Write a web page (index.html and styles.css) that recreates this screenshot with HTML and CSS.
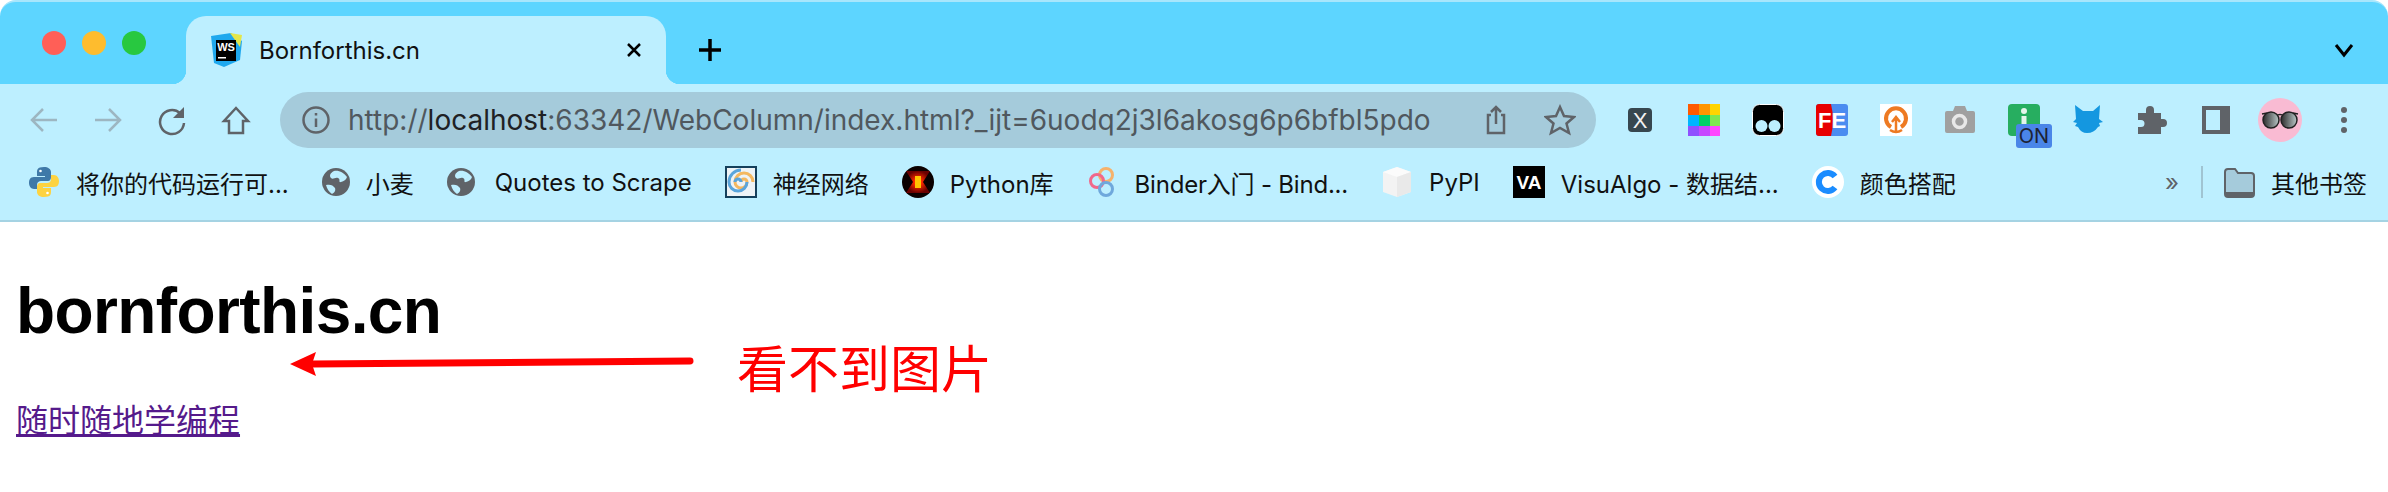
FILE: index.html
```html
<!DOCTYPE html>
<html>
<head>
    <title>Bornforthis.cn</title>
    <link rel="stylesheet" href="styles.css">
</head>
<body>

    <div class="tabstrip">
        <div class="lights">
            <span class="light red"></span>
            <span class="light yellow"></span>
            <span class="light green"></span>
        </div>
        <div class="tab">
            <svg class="favicon" viewBox="0 0 32 34">
                <path d="M1 3L21 0L32 8L30 27L14 34L4 30z" fill="#1fa8ee"/>
                <path d="M20 0L32 2L30 14z" fill="#e4e64a"/>
                <rect x="6" y="7" width="20" height="21" fill="#000"/>
                <text x="16" y="18" class="ws-text">WS</text>
                <rect x="8" y="24" width="8" height="1.5" fill="#fff"/>
            </svg>
            <span class="tab-title">Bornforthis.cn</span>
            <svg class="tab-close" viewBox="0 0 20 20">
                <path d="M4 4L16 16M16 4L4 16"/>
            </svg>
        </div>
        <svg class="new-tab" viewBox="0 0 32 32">
            <path d="M16 5V27M5 16H27"/>
        </svg>
        <svg class="tab-menu" viewBox="0 0 32 32">
            <path d="M8 11L16 21L24 11"/>
        </svg>
    </div>

    <div class="toolbar">
        <div class="btn">
            <svg class="line-icon faded" viewBox="0 0 32 32"><path d="M29 16H4M15 5L4 16L15 27"/></svg>
        </div>
        <div class="btn">
            <svg class="line-icon faded" viewBox="0 0 32 32"><path d="M3 16H28M17 5L28 16L17 27"/></svg>
        </div>
        <div class="btn">
            <svg class="line-icon" viewBox="0 0 32 32">
                <path d="M24 9A12 12 0 1 0 28 19"/>
                <path d="M28 3V14H17z" class="solid"/>
            </svg>
        </div>
        <div class="btn">
            <svg class="line-icon" viewBox="0 0 32 32"><path d="M16 4L4 17H9V29H23V17H28z"/></svg>
        </div>

        <div class="address">
            <svg class="line-icon info" viewBox="0 0 32 32">
                <circle cx="16" cy="16" r="12.5"/>
                <path d="M16 14.5V23M16 9V11.5"/>
            </svg>
            <span class="url">http://<b>localhost</b>:63342/WebColumn/index.html?_ijt=6uodq2j3l6akosg6p6bfbl5pdo</span>
            <svg class="line-icon share" viewBox="0 0 32 32">
                <path d="M11 11H8V29H24V11H21M16 20V3M11 8L16 3L21 8"/>
            </svg>
            <svg class="line-icon star" viewBox="0 0 32 32">
                <path d="M16 3L20 12L30 13L22.500 19.500L25 29L16 24L7 29L9.500 19.500L2 13L12 12z"/>
            </svg>
        </div>

        <div class="btn">
            <svg class="ext" viewBox="0 0 32 32">
                <rect x="4" y="4" width="24" height="24" rx="4" fill="#37474f"/>
                <text x="16" y="24" class="x-text">X</text>
            </svg>
        </div>
        <div class="btn">
            <svg class="ext" viewBox="0 0 32 32">
                <rect x="0" y="0" width="11" height="11" fill="#ff5a00"/>
                <rect x="11" y="0" width="11" height="11" fill="#ff9500"/>
                <rect x="22" y="0" width="10" height="11" fill="#ffd400"/>
                <rect x="0" y="11" width="11" height="11" fill="#00b4ff"/>
                <rect x="11" y="11" width="11" height="11" fill="#00d068"/>
                <rect x="22" y="11" width="10" height="11" fill="#80e650"/>
                <rect x="0" y="22" width="11" height="10" fill="#9050ff"/>
                <rect x="11" y="22" width="11" height="10" fill="#c648ff"/>
                <rect x="22" y="22" width="10" height="10" fill="#ff48ff"/>
            </svg>
        </div>
        <div class="btn">
            <svg class="ext" viewBox="0 0 32 32">
                <rect x="0.500" y="0.500" width="31" height="31" rx="7" fill="#000" stroke="#fff"/>
                <circle cx="9.500" cy="22" r="6" fill="#bdefff"/>
                <circle cx="22.500" cy="22" r="6" fill="#bdefff"/>
            </svg>
        </div>
        <div class="btn">
            <svg class="ext" viewBox="0 0 32 32">
                <rect width="32" height="32" rx="3" fill="#4b8cf0"/>
                <path d="M3 0H15Q19 16 15 32H3Q0 32 0 29V3Q0 0 3 0z" fill="#e80000"/>
                <text x="16" y="24" class="fe-text">FE</text>
            </svg>
        </div>
        <div class="btn">
            <svg class="ext" viewBox="0 0 32 32">
                <rect width="32" height="32" fill="#fff"/>
                <path d="M11 23A10 10 0 1 1 21 23" class="q-ring"/>
                <path d="M16 27V14M12 18L16 13L20 18" class="q-arrow"/>
                <path d="M10 26Q16 30 22 26" class="q-arrow"/>
            </svg>
        </div>
        <div class="btn">
            <svg class="ext" viewBox="0 0 32 32">
                <path d="M3 7H9L11 2H21L23 7H29Q31 7 31 9V27Q31 29 29 29H3Q1 29 1 27V9Q1 7 3 7z" fill="#a0a0a0"/>
                <circle cx="15.500" cy="17.500" r="6" fill="none" stroke="#e8e8e8" stroke-width="3.500"/>
            </svg>
        </div>
        <div class="btn">
            <div class="ext-info">
                <svg class="ext" viewBox="0 0 32 32">
                    <rect width="32" height="32" rx="4" fill="#27ae60"/>
                    <circle cx="16" cy="7" r="3" fill="#e4f5ea"/>
                    <rect x="13.500" y="12" width="5" height="12" fill="#e4f5ea"/>
                </svg>
                <span class="badge">ON</span>
            </div>
        </div>
        <div class="btn">
            <svg class="ext" viewBox="0 0 32 32">
                <path d="M3 1L11 7H21L28 1L27 15L31 18L27 19L28 22L26 23Q22 29 15 29Q9 29 6 23L3 22L5 19L1 18L4 15z" fill="#1497e0"/>
            </svg>
        </div>
        <div class="btn">
            <svg class="ext" viewBox="0 0 32 32">
                <path d="M2 9H10V6A4 4 0 0 1 18 6V9H25V15H27A4 4 0 0 1 27 23H25V30H2V23H5A3.500 3.500 0 0 0 5 16H2z" fill="#5f6368"/>
            </svg>
        </div>
        <div class="btn">
            <div class="panel"></div>
        </div>
        <div class="btn">
            <div class="avatar">
                <svg class="glasses" viewBox="0 0 38 20">
                    <defs>
                        <linearGradient id="lens">
                            <stop offset="0" stop-color="#2b2b2b"/>
                            <stop offset="1" stop-color="#b9c8c8"/>
                        </linearGradient>
                    </defs>
                    <path d="M1 4L6 3M37 4L32 3M15 6Q19 3 23 6" stroke="#222" stroke-width="1.500" fill="none"/>
                    <circle cx="10" cy="10" r="8" fill="url(#lens)" stroke="#222" stroke-width="1.500"/>
                    <circle cx="28" cy="10" r="8" fill="url(#lens)" stroke="#222" stroke-width="1.500"/>
                </svg>
            </div>
        </div>
        <div class="btn">
            <div class="dots"><span></span><span></span><span></span></div>
        </div>
    </div>

    <div class="bookmarks">
        <div class="bookmark">
            <svg class="bm-icon" viewBox="0 0 32 32">
                <path d="M16 1C9 1 9 4 9 7V10H17V11H6C2 11 1 14 1 17S3 23 6 23H9V19C9 16 11 15 13 15H20C22 15 23 13 23 11V6C23 3 20 1 16 1z" fill="#3f79a8"/>
                <path d="M16 31C23 31 23 28 23 25V22H15V21H26C30 21 31 18 31 15S29 9 26 9H23V13C23 16 21 17 19 17H12C10 17 9 19 9 21V26C9 29 12 31 16 31z" fill="#fdd341"/>
                <circle cx="12.500" cy="5" r="1.300" fill="#fff"/>
                <circle cx="19.500" cy="27" r="1.300" fill="#fff"/>
            </svg>
            <span>将你的代码运行可...</span>
        </div>
        <div class="bookmark">
            <svg class="bm-icon globe" viewBox="0 0 28 28">
                <circle cx="14" cy="14" r="14" fill="#5f6368"/>
                <path d="M12 3C8 5 7 8 9 10C11 12 13 9 16 10C19 11 16 15 19 14C22 13 24 12 25 9C22 5 17 2 12 3zM4 17C8 16 11 17 13 20C14 23 12 25 10 26C7 24 5 21 4 17z" fill="#bdefff"/>
            </svg>
            <span>小麦</span>
        </div>
        <div class="bookmark bm-quotes">
            <svg class="bm-icon globe" viewBox="0 0 28 28">
                <circle cx="14" cy="14" r="14" fill="#5f6368"/>
                <path d="M12 3C8 5 7 8 9 10C11 12 13 9 16 10C19 11 16 15 19 14C22 13 24 12 25 9C22 5 17 2 12 3zM4 17C8 16 11 17 13 20C14 23 12 25 10 26C7 24 5 21 4 17z" fill="#bdefff"/>
            </svg>
            <span>Quotes to Scrape</span>
        </div>
        <div class="bookmark">
            <svg class="bm-icon" viewBox="0 0 32 32">
                <rect width="32" height="32" fill="#15405c"/>
                <rect x="2" y="2" width="28" height="28" fill="#eef3f6"/>
                <path d="M16 16A3 3 0 0 1 22 16A6 6 0 0 1 10 16A9 9 0 0 1 28 16" fill="none" stroke="#f4b860" stroke-width="3"/>
                <path d="M16 16A3 3 0 0 0 10 16M22 16A9 9 0 0 1 4 16A12 12 0 0 1 16 4" fill="none" stroke="#5aa5dc" stroke-width="3"/>
            </svg>
            <span>神经网络</span>
        </div>
        <div class="bookmark">
            <svg class="bm-icon" viewBox="0 0 32 32">
                <defs>
                    <radialGradient id="glow">
                        <stop offset="0.300" stop-color="#ff2a00"/>
                        <stop offset="1" stop-color="#6a0000"/>
                    </radialGradient>
                </defs>
                <circle cx="16" cy="16" r="16" fill="#0b0000"/>
                <path d="M4 5H28L21 16L28 27H4L11 16z" fill="url(#glow)"/>
                <rect x="13" y="10" width="6" height="12" fill="#ffc400"/>
            </svg>
            <span>Python库</span>
        </div>
        <div class="bookmark bm-binder">
            <svg class="bm-icon" viewBox="0 0 32 32">
                <circle cx="19" cy="9" r="6.500" fill="none" stroke="#f6b26b" stroke-width="3"/>
                <circle cx="10" cy="15" r="6.500" fill="none" stroke="#f0688a" stroke-width="3"/>
                <circle cx="19" cy="23" r="6.500" fill="none" stroke="#6fa8dc" stroke-width="3"/>
            </svg>
            <span>Binder入门 - Bind...</span>
        </div>
        <div class="bookmark">
            <svg class="bm-icon" viewBox="0 0 32 32">
                <path d="M16 1L30 6V26L16 31L2 26V6z" fill="#f3f3f3"/>
                <path d="M2 6L16 11L30 6L16 1z" fill="#fbfbfb"/>
                <path d="M16 11V31L30 26V6z" fill="#e9e9e9"/>
            </svg>
            <span>PyPI</span>
        </div>
        <div class="bookmark">
            <svg class="bm-icon" viewBox="0 0 32 32">
                <rect width="32" height="32" fill="#000"/>
                <text x="16" y="23" class="va-text">VA</text>
            </svg>
            <span>VisuAlgo - 数据结...</span>
        </div>
        <div class="bookmark">
            <svg class="bm-icon" viewBox="0 0 32 32">
                <circle cx="16" cy="16" r="16" fill="#fff"/>
                <path d="M23 10.500A9 9 0 1 0 23 21.500" class="c-arc"/>
            </svg>
            <span>颜色搭配</span>
        </div>

        <div class="bm-more">»</div>
        <div class="bm-divider"></div>
        <div class="bookmark bm-last">
            <svg class="bm-icon" viewBox="0 0 32 32">
                <path d="M2 6Q2 3 5 3H12L15 7H28Q31 7 31 10V28Q31 31 28 31H5Q2 31 2 28z" fill="#a5cbdb" stroke="#5f6368" stroke-width="2"/>
                <rect x="2" y="26" width="29" height="4" fill="#5f6368"/>
            </svg>
            <span>其他书签</span>
        </div>
    </div>

    <div class="page">
        <h1>bornforthis.cn</h1>
        <p class="link-row"><a href="#" class="visited">随时随地学编程</a></p>

        <svg class="note-arrow" viewBox="0 0 410 40">
            <path d="M400 17L22 20" class="note-line"/>
            <path d="M0 20L26 8L22 20L26 32z" fill="#ff0000"/>
        </svg>
        <div class="note">看不到图片</div>
    </div>

</body>
</html>
```

FILE: styles.css
```css
body {
    margin: 0;
    background-color: white;
    font-family: "Inter", "Noto Sans CJK SC", sans-serif;
    overflow: hidden;
}

/* tab strip */

.tabstrip {
    display: flex;
    height: 82px;
    background-color: #5dd5ff;
    border-top: 2px solid #a8e6fc;
    border-radius: 16px 16px 0 0;
}

.lights {
    display: flex;
    align-items: center;
    gap: 16px;
    width: 144px;
    padding-left: 42px;
}

.light {
    width: 24px;
    height: 24px;
    border-radius: 50%;
}

.red {background-color: #ff5f57;}
.yellow {background-color: #febc2e;}
.green {background-color: #28c840;}

.tab {
    display: flex;
    align-items: center;
    position: relative;
    align-self: flex-end;
    box-sizing: border-box;
    width: 480px;
    height: 68px;
    padding: 0 24px;
    background-color: #bdefff;
    border-radius: 20px 20px 0 0;
}

.tab::before,
.tab::after {
    content: "";
    position: absolute;
    bottom: 0;
    width: 14px;
    height: 14px;
}

.tab::before {
    left: -14px;
    background: radial-gradient(circle at 0 0, #5dd5ff 14px, #bdefff 14.500px);
}

.tab::after {
    right: -14px;
    background: radial-gradient(circle at 100% 0, #5dd5ff 14px, #bdefff 14.500px);
}

.favicon {
    width: 32px;
    height: 34px;
    margin-right: 17px;
}

.ws-text {
    font-family: "Liberation Sans", sans-serif;
    font-size: 11px;
    font-weight: bold;
    fill: white;
    text-anchor: middle;
}

.tab-title {
    flex: 1;
    font-size: 24px;
    color: #111;
}

.tab-close {
    width: 20px;
    height: 20px;
    margin-right: -2px;
    fill: none;
    stroke: black;
    stroke-width: 2.500;
}

.new-tab {
    width: 32px;
    height: 32px;
    margin: 32px 0 0 28px;
    fill: none;
    stroke: black;
    stroke-width: 3.500;
}

.tab-menu {
    width: 32px;
    height: 32px;
    margin: 32px 28px 0 auto;
    fill: none;
    stroke: black;
    stroke-width: 3;
}

/* toolbar */

.toolbar {
    display: flex;
    align-items: center;
    height: 72px;
    padding: 0 12px;
    box-sizing: border-box;
    background-color: #bdefff;
}

.btn {
    display: flex;
    justify-content: center;
    align-items: center;
    flex: none;
    width: 64px;
}

.line-icon {
    width: 32px;
    height: 32px;
    fill: none;
    stroke: #5f6368;
    stroke-width: 2.500;
}

.line-icon .solid {
    fill: #5f6368;
    stroke: none;
}

.faded {
    stroke: #9db6c1;
}

.address {
    display: flex;
    align-items: center;
    flex: 1;
    height: 56px;
    margin: 0 12px;
    padding: 0 20px;
    background-color: #a5cbdb;
    border-radius: 28px;
}

.url {
    flex: 1;
    margin-left: 16px;
    font-size: 28px;
    color: #50585e;
    white-space: nowrap;
}

.url b {
    font-weight: normal;
    color: #202124;
}

.share {
    margin-right: 32px;
}

.ext {
    display: block;
    width: 32px;
    height: 32px;
}

.x-text {
    font-family: "Liberation Sans", sans-serif;
    font-size: 22px;
    fill: #f2f2f2;
    text-anchor: middle;
}

.fe-text {
    font-family: "Liberation Sans", sans-serif;
    font-size: 22px;
    font-weight: bold;
    fill: white;
    text-anchor: middle;
}

.q-ring {
    fill: none;
    stroke: #ee7a22;
    stroke-width: 4;
}

.q-arrow {
    fill: none;
    stroke: #ee7a22;
    stroke-width: 2.500;
}

.ext-info {
    position: relative;
}

.badge {
    position: absolute;
    left: 8px;
    top: 20px;
    width: 36px;
    height: 24px;
    background-color: #4a86e8;
    border-radius: 3px;
    font-size: 20px;
    line-height: 24px;
    text-align: center;
    color: #1d2333;
}

.panel {
    box-sizing: border-box;
    width: 28px;
    height: 28px;
    border: solid #5f6368;
    border-width: 4px 10px 4px 4px;
}

.avatar {
    display: flex;
    justify-content: center;
    align-items: center;
    width: 44px;
    height: 44px;
    background-color: #f9bbd3;
    border-radius: 50%;
}

.glasses {
    width: 38px;
    height: 20px;
}

.dots {
    display: flex;
    flex-direction: column;
    gap: 4px;
}

.dots span {
    width: 6px;
    height: 6px;
    background-color: #5f6368;
    border-radius: 50%;
}

/* bookmarks */

.bookmarks {
    display: flex;
    align-items: center;
    height: 66px;
    padding: 0 21px 12px 28px;
    box-sizing: border-box;
    background-color: #bdefff;
    border-bottom: 2px solid #a5d3e3;
    font-size: 24px;
    color: #111;
}

.bookmark {
    display: flex;
    align-items: center;
    gap: 16px;
    margin-right: 33px;
    white-space: nowrap;
}

.bm-quotes {
    gap: 20px;
}

.bm-binder span {
    letter-spacing: -0.2px;
}

.bm-icon {
    flex: none;
    width: 32px;
    height: 32px;
}

.globe {
    width: 28px;
    height: 28px;
}

.va-text {
    font-family: "Liberation Sans", sans-serif;
    font-size: 19px;
    font-weight: bold;
    fill: white;
    text-anchor: middle;
}

.c-arc {
    fill: none;
    stroke: #1a8cff;
    stroke-width: 6;
}

.bm-more {
    margin-left: auto;
    margin-right: 22px;
    color: #5f6368;
}

.bm-divider {
    width: 2px;
    height: 32px;
    margin-right: 20px;
    background-color: #a0c4d2;
}

.bm-last {
    margin-right: 0;
}

/* page content */

.page {
    position: relative;
    box-sizing: border-box;
    height: 270px;
    padding: 53px 16px 0;
    font-family: "Liberation Sans", "Noto Sans CJK SC", sans-serif;
}

h1 {
    margin: 0;
    font-size: 64px;
    line-height: 72px;
    letter-spacing: -0.6px;
}

.link-row {
    margin: 56px 0 0 0;
    font-size: 32px;
    line-height: 37px;
}

.visited {
    color: #551a8b;
}

.note-arrow {
    position: absolute;
    left: 290px;
    top: 122px;
    width: 410px;
    height: 40px;
}

.note-line {
    fill: none;
    stroke: #ff0000;
    stroke-width: 7;
    stroke-linecap: round;
}

.note {
    position: absolute;
    left: 737px;
    top: 119px;
    font-size: 51px;
    line-height: 60px;
    color: #ff0000;
}
```
